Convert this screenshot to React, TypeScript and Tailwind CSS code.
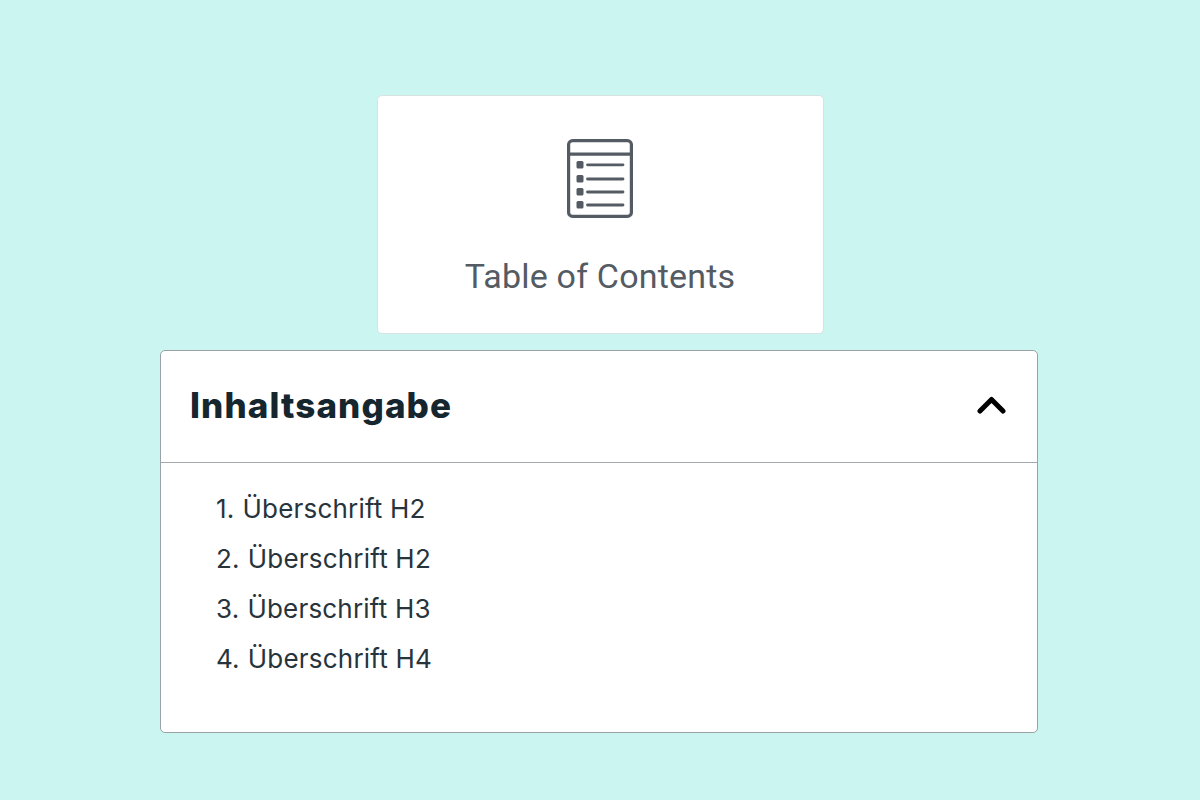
const ITEMS = [
  { num: "1.", label: "Überschrift H2" },
  { num: "2.", label: "Überschrift H2" },
  { num: "3.", label: "Überschrift H3" },
  { num: "4.", label: "Überschrift H4" },
];

function TocIcon() {
  return (
    <svg width="66" height="79" viewBox="0 0 66 79" fill="none" stroke="#545b63" strokeWidth="3.2">
      <rect x="1.6" y="1.6" width="62.8" height="75.8" rx="4" />
      <path d="M1.5 15.2H64.5" />
      <g strokeWidth="2.8" strokeLinecap="round">
        <path d="M20.5 25.8H56" />
        <path d="M20.5 40H56" />
        <path d="M20.5 53H56" />
        <path d="M20.5 66H56" />
      </g>
      <g fill="#545b63" stroke="none">
        <rect x="9.5" y="22" width="7" height="7.5" rx="1.5" />
        <rect x="9.5" y="36" width="7" height="7.5" rx="1.5" />
        <rect x="9.5" y="49" width="7" height="7.5" rx="1.5" />
        <rect x="9.5" y="62" width="7" height="7.5" rx="1.5" />
      </g>
    </svg>
  );
}

export default function App() {
  return (
    <div className="flex min-h-screen flex-col items-center bg-[#caf5f0] pt-[95px]">
      <div className="flex h-[239px] w-[447px] flex-col items-center rounded-[5px] border border-[#d8e2e2] bg-white pt-[43px]">
        <TocIcon />
        <div className="mt-[38px] font-['Roboto',sans-serif] text-[34px] leading-[40px] tracking-[0.2px] text-[#545b63]">
          Table of Contents
        </div>
      </div>
      <div className="mt-[16px] ml-[-2px] h-[383px] w-[878px] rounded-[5px] border border-[#9aa2a6] bg-white">
        <div className="flex h-[112px] items-center justify-between border-b border-[#a3a9ac] pr-[30px] pb-[3px] pl-[29px]">
          <h2 className="font-['Inter',sans-serif] text-[35px] leading-[40px] font-extrabold tracking-[1.1px] text-[#16262f]">
            Inhaltsangabe
          </h2>
          <svg width="30" height="18" viewBox="0 0 30 18" fill="none" stroke="#000" strokeWidth="5" strokeLinecap="round" strokeLinejoin="round">
            <path d="M3 15L14.5 3.5L26 15" />
          </svg>
        </div>
        <ol className="flex flex-col gap-[14px] pt-[28px] pl-[55px] font-['Inter',sans-serif] text-[26px] leading-[36px] tracking-[0.2px] text-[#27343c]">
          {ITEMS.map((item) => (
            <li key={item.num + item.label} className="flex gap-[8px]">
              <span>{item.num}</span>
              <span>{item.label}</span>
            </li>
          ))}
        </ol>
      </div>
    </div>
  );
}
